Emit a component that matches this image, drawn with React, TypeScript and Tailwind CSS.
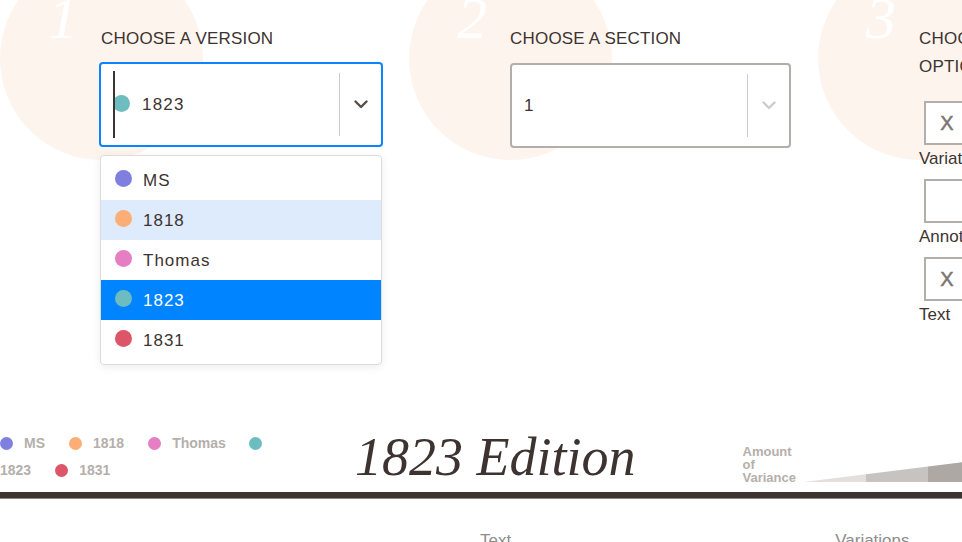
import React from "react";

const SANS = "font-['Liberation_Sans','Arial',sans-serif]";
const SERIF = "font-['Liberation_Serif','Times_New_Roman',serif]";

const versions = [
  { name: "MS", color: "bg-[#7f7fe0]" },
  { name: "1818", color: "bg-[#fdad76]" },
  { name: "Thomas", color: "bg-[#e57ec3]" },
  { name: "1823", color: "bg-[#6dbdc0]" },
  { name: "1831", color: "bg-[#dc5568]" },
];

function Chevron({ color }: { color: string }) {
  return (
    <svg width="14" height="9" viewBox="0 0 14 9" fill="none">
      <path d="M1.5 1.5 L7 7 L12.5 1.5" stroke={color} strokeWidth="2.4" strokeLinecap="round" strokeLinejoin="round" />
    </svg>
  );
}

function Circle({ n }: { n: string }) {
  return (
    <div className="absolute left-0 top-[-43px] h-[203px] w-[203px] rounded-full bg-[#fdf4ee]">
      <span className={`absolute left-[48px] top-[31px] text-[60px] italic leading-[60px] text-white ${SERIF}`}>{n}</span>
    </div>
  );
}

function Check({ checked, label }: { checked: boolean; label: string }) {
  return (
    <div className="flex flex-col">
      <div className="ml-[5px] flex h-[44px] w-[46px] items-center justify-center border-2 border-[#b3aeaa] bg-white text-[20px] leading-none text-[#7d7672] [-webkit-text-stroke:0.5px_#7d7672]">
        {checked ? "X" : ""}
      </div>
      <div className="mb-[10px] mt-[4px] whitespace-nowrap text-[17px] leading-[20px] text-[#3d3330]">{label}</div>
    </div>
  );
}

export default function App() {
  return (
    <div className={`relative h-[542px] w-[962px] overflow-hidden bg-white text-[#3d3330] ${SANS}`}>
      {/* top controls */}
      <div className="flex h-[420px]">
        {/* column 1 */}
        <div className="relative w-[409px] shrink-0 pl-[101px] pt-[25px]">
          <Circle n="1" />
          <div className="relative">
            <div className="text-[17px] uppercase leading-[27px] tracking-[0.2px] text-[#3d3330]">Choose a version</div>
            <div className="-ml-[2px] mt-[10px] flex h-[85px] w-[284px] items-center rounded-[4px] border-2 border-[#0a84ff] bg-white">
              <div className="relative flex h-full w-[238px] items-center pl-[12px]">
                <span className="absolute left-[12px] top-[7px] h-[67px] w-[2px] bg-[#3d3330]" />
                <span className="-mt-[2px] h-[17px] w-[17px] shrink-0 rounded-full bg-[#6dbdc0]" />
                <span className="ml-[12px] text-[17px] tracking-[1.2px] text-[#3d3330]">1823</span>
              </div>
              <span className="h-[63px] w-px bg-[#cccccc]" />
              <div className="flex flex-1 items-center justify-center">
                <Chevron color="#555049" />
              </div>
            </div>
          </div>
        </div>
        {/* column 2 */}
        <div className="relative w-[409px] shrink-0 pl-[101px] pt-[25px]">
          <Circle n="2" />
          <div className="relative">
            <div className="text-[17px] uppercase leading-[27px] tracking-[0.2px] text-[#3d3330]">Choose a section</div>
            <div className="mt-[11px] flex h-[85px] w-[281px] items-center rounded-[4px] border-2 border-[#b3aeaa] bg-white">
              <div className="flex h-full w-[235px] items-center pl-[12px]">
                <span className="text-[17px] text-[#3d3330]">1</span>
              </div>
              <span className="h-[63px] w-px bg-[#cccccc]" />
              <div className="flex flex-1 items-center justify-center">
                <Chevron color="#cccccc" />
              </div>
            </div>
          </div>
        </div>
        {/* column 3 */}
        <div className="relative w-[409px] shrink-0 pl-[101px] pt-[25px]">
          <Circle n="3" />
          <div className="relative">
            <div className="w-[200px] text-[17px] uppercase leading-[28px] tracking-[0.2px] text-[#3d3330]">
              Choose
              <br />
              Options
            </div>
            <div className="mt-[20px]">
              <Check checked label="Variations" />
              <Check checked={false} label="Annotations" />
              <Check checked label="Text" />
            </div>
          </div>
        </div>
      </div>

      {/* dropdown menu overlay */}
      <div className="absolute left-[100px] top-[155px] w-[282px] rounded-[4px] border border-[#dcdcdc] bg-white py-[4px] shadow-[0_2px_8px_rgba(0,0,0,0.08)]">
        {versions.map((v) => {
          const sel = v.name === "1823";
          const hov = v.name === "1818";
          return (
            <div
              key={v.name}
              className={`flex h-[40px] items-center pl-[14px] ${sel ? "bg-[#0084ff] text-white" : hov ? "bg-[#deebfc] text-[#3d3330]" : "text-[#3d3330]"}`}
            >
              <span className={`-mt-[4px] h-[17px] w-[17px] shrink-0 rounded-full ${v.color}`} />
              <span className="ml-[11px] mt-[2px] text-[17px] tracking-[1px]">{v.name}</span>
            </div>
          );
        })}
      </div>

      {/* legend / title row */}
      <div className="flex h-[72px] items-end">
        <div className="mb-[8px] flex w-[355px] shrink-0">
          <div className="flex w-[300px] flex-wrap items-center text-[14px] font-bold leading-[27px] text-[#b5afab]">
            <span className="mr-[11px] h-[13px] w-[13px] rounded-full bg-[#7f7fe0]" />
            <span className="mr-[24px]">MS</span>
            <span className="mr-[11px] h-[13px] w-[13px] rounded-full bg-[#fdad76]" />
            <span className="mr-[24px]">1818</span>
            <span className="mr-[11px] h-[13px] w-[13px] rounded-full bg-[#e57ec3]" />
            <span className="mr-[23px]">Thomas</span>
            <span className="mr-[11px] h-[13px] w-[13px] rounded-full bg-[#6dbdc0]" />
            <span className="mr-[24px]">1823</span>
            <span className="mr-[11px] h-[13px] w-[13px] rounded-full bg-[#dc5568]" />
            <span className="mr-[23px]">1831</span>
          </div>
        </div>
        <div className={`mb-[5px] shrink-0 whitespace-nowrap text-[54px] italic leading-[60px] text-[#3d3330] ${SERIF}`}>1823 Edition</div>
        <div className="mb-[8px] ml-[107px] flex shrink-0 flex-col text-[13px] font-bold leading-[13px] text-[#b5afab]">
          <span>Amount</span>
          <span>of</span>
          <span>Variance</span>
        </div>
        <svg className="mb-[9px] ml-[8px] shrink-0" width="160" height="21" viewBox="0 0 160 21">
          <polygon points="0,20 62,12.2 62,20" fill="#e2dfdc" />
          <polygon points="62,12.2 124,4.5 124,20 62,20" fill="#c7c3c0" />
          <polygon points="124,4.5 160,0 160,20 124,20" fill="#aea8a4" />
        </svg>
      </div>

      {/* heavy rule */}
      <div className="h-[7px] border-b border-[#8f8884] bg-[#3e3531]" />

      {/* column headers */}
      <div className="mt-[32px] flex pl-[480px] text-[17px] leading-[20px] text-[#8d8d8d]">
        <span>Text</span>
        <span className="ml-[324px]">Variations</span>
      </div>
    </div>
  );
}
